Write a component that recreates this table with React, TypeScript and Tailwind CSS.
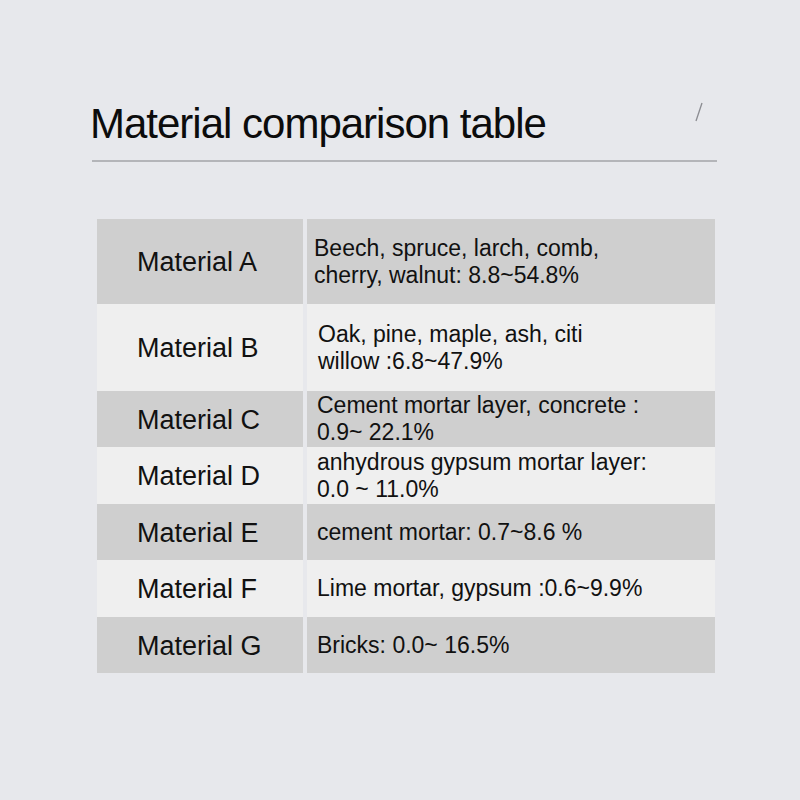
const ROWS = [
  { name: "Material A", lines: ["Beech, spruce, larch, comb,", "cherry, walnut: 8.8~54.8%"], h: "h-[85px]", pl: "pl-[7px]", dark: true },
  { name: "Material B", lines: ["Oak, pine, maple, ash, citi", "willow :6.8~47.9%"], h: "h-[87px]", pl: "pl-[11px]", dark: false },
  { name: "Material C", lines: ["Cement mortar layer, concrete :", "0.9~ 22.1%"], h: "h-[56px]", pl: "pl-[10px]", dark: true },
  { name: "Material D", lines: ["anhydrous gypsum mortar layer:", "0.0 ~ 11.0%"], h: "h-[57px]", pl: "pl-[10px]", dark: false },
  { name: "Material E", lines: ["cement mortar: 0.7~8.6 %"], h: "h-[56px]", pl: "pl-[10px]", dark: true },
  { name: "Material F", lines: ["Lime mortar, gypsum :0.6~9.9%"], h: "h-[57px]", pl: "pl-[10px]", dark: false },
  { name: "Material G", lines: ["Bricks: 0.0~ 16.5%"], h: "h-[56px]", pl: "pl-[10px]", dark: true },
];

export default function App() {
  return (
    <div
      className="w-[800px] h-[800px] bg-[#e7e8ec] pt-[103px] text-[#111]"
      style={{ fontFamily: '"Liberation Sans", Arial, sans-serif' }}
    >
      {/* Header */}
      <div className="ml-[90px] w-[627px]">
        <div className="flex items-start justify-between pr-[14px]">
          <h1 className="text-[42px] leading-none tracking-[-1px] text-[#0c0c0c]">
            Material comparison table
          </h1>
          <svg width="8" height="20" viewBox="0 0 8 20" className="-mt-[1px]">
            <line x1="7" y1="1" x2="1" y2="19" stroke="#8a8b90" strokeWidth="1.3" />
          </svg>
        </div>
        <div className="mt-[15px] ml-[2px] h-[2px] bg-[#b4b5b9]" />
      </div>

      {/* Table */}
      <div className="ml-[97px] mt-[57px] w-[618px] flex flex-col">
        {ROWS.map((row) => (
          <div key={row.name} className={`grid grid-cols-[206px_408px] gap-x-[4px] ${row.h}`}>
            <div
              className={`flex items-center pl-[40px] pt-[2px] text-[27px] ${row.dark ? "bg-[#cfcfcf]" : "bg-[#efefef]"}`}
            >
              {row.name}
            </div>
            <div
              className={`flex flex-col justify-center text-[23px] leading-[27px] ${row.pl} ${row.dark ? "bg-[#cfcfcf]" : "bg-[#efefef]"}`}
            >
              {row.lines.map((l) => (
                <span key={l} className="whitespace-nowrap">{l}</span>
              ))}
            </div>
          </div>
        ))}
      </div>
    </div>
  );
}
